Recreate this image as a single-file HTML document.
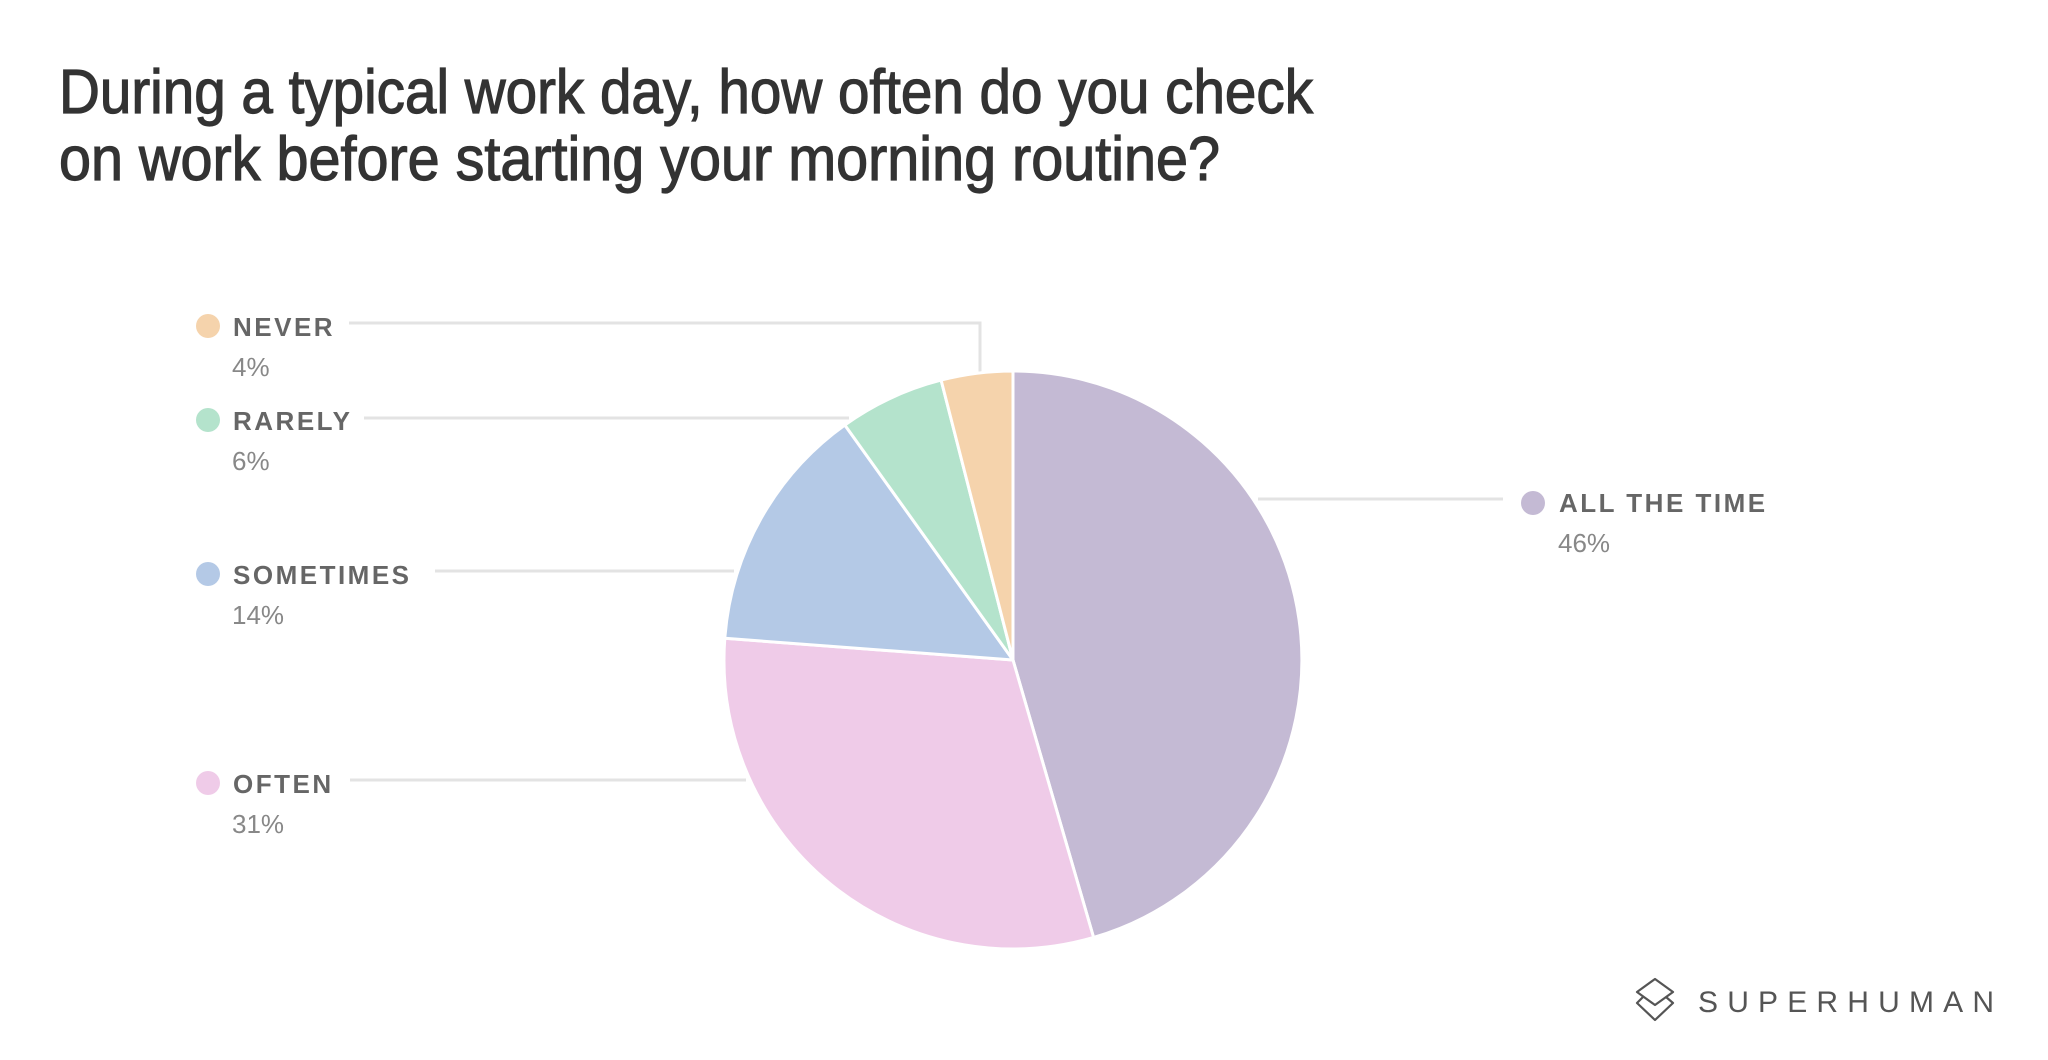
<!DOCTYPE html>
<html><head><meta charset="utf-8"><style>
html,body{margin:0;padding:0;background:#fff;}
svg{display:block}
</style></head><body>
<svg width="2048" height="1060" viewBox="0 0 2048 1060" xmlns="http://www.w3.org/2000/svg">
<g font-family="Liberation Sans, sans-serif" fill="#333" stroke="#333" stroke-width="1.2">
<text x="59" y="113" font-size="62" textLength="1254" lengthAdjust="spacingAndGlyphs">During a typical work day, how often do you check</text>
<text x="59" y="180" font-size="62" textLength="1161" lengthAdjust="spacingAndGlyphs">on work before starting your morning routine?</text>
</g>
<g stroke="#e3e3e3" stroke-width="3" fill="none">
<polyline points="349,323 980,323 980,372"/>
<line x1="364" y1="418" x2="849" y2="418"/>
<line x1="435" y1="571" x2="734" y2="571"/>
<line x1="350" y1="780" x2="746" y2="780"/>
<line x1="1258" y1="499" x2="1503" y2="499"/>
</g>
<g stroke="#fff" stroke-width="3" stroke-linejoin="round">
<path d="M1013,660 L1013,371 A289,289 0 0 1 1093.6,937.5 Z" fill="#c4bad4"/>
<path d="M1013,660 L1093.6,937.5 A289,289 0 0 1 724.8,638.3 Z" fill="#efcbe8"/>
<path d="M1013,660 L724.8,638.3 A289,289 0 0 1 844.8,425 Z" fill="#b4c9e6"/>
<path d="M1013,660 L844.8,425 A289,289 0 0 1 941.1,380.1 Z" fill="#b4e3cc"/>
<path d="M1013,660 L941.1,380.1 A289,289 0 0 1 1013,371 Z" fill="#f5d3ac"/>
</g>
<g font-family="Liberation Sans, sans-serif" font-size="26">
<circle cx="208" cy="326" r="12" fill="#f5d3ac"/>
<text x="233" y="336" font-weight="bold" fill="#666" letter-spacing="2.5">NEVER</text>
<text x="232" y="376" fill="#888">4%</text>
<circle cx="208" cy="420" r="12" fill="#b4e3cc"/>
<text x="233" y="430" font-weight="bold" fill="#666" letter-spacing="2.5">RARELY</text>
<text x="232" y="470" fill="#888">6%</text>
<circle cx="208" cy="574" r="12" fill="#b4c9e6"/>
<text x="233" y="584" font-weight="bold" fill="#666" letter-spacing="2.5">SOMETIMES</text>
<text x="232" y="624" fill="#888">14%</text>
<circle cx="208" cy="783" r="12" fill="#efcbe8"/>
<text x="233" y="793" font-weight="bold" fill="#666" letter-spacing="2.5">OFTEN</text>
<text x="232" y="833" fill="#888">31%</text>
<circle cx="1533" cy="503" r="12" fill="#c4bad4"/>
<text x="1559" y="512" font-weight="bold" fill="#666" letter-spacing="2.5">ALL THE TIME</text>
<text x="1558" y="552" fill="#888">46%</text>
</g>
<g fill="none" stroke="#555" stroke-width="2.2" stroke-linejoin="round">
<path d="M1655,979 L1673,992 L1655,1005 L1637,992 Z"/>
<path d="M1643,997 L1637,1003 L1655,1020 L1673,1003 L1666,997"/>
</g>
<text x="1698" y="1012" font-family="Liberation Sans, sans-serif" font-size="30" fill="#555" textLength="296" lengthAdjust="spacing">SUPERHUMAN</text>
</svg>
</body></html>
